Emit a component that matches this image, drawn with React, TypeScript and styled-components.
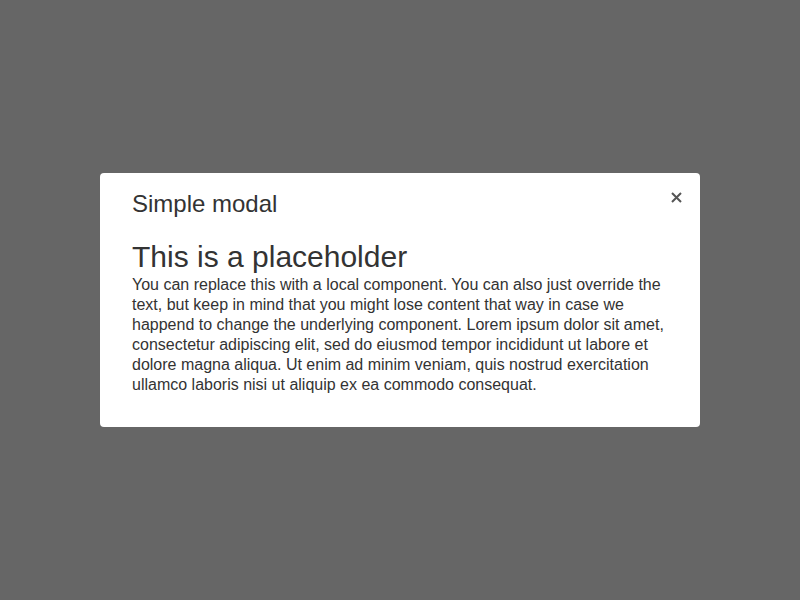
import React from 'react';
import styled, { createGlobalStyle } from 'styled-components';

const GlobalStyle = createGlobalStyle`
  html, body {
    margin: 0;
    padding: 0;
    height: 100%;
  }
  body {
    font-family: "Liberation Sans", Arial, sans-serif;
    background: #666666;
  }
  #root {
    height: 100%;
  }
`;

const Overlay = styled.div`
  width: 800px;
  height: 600px;
  background: #666666;
  display: flex;
  align-items: center;
  justify-content: center;
`;

const Modal = styled.div`
  position: relative;
  width: 600px;
  box-sizing: border-box;
  background: #ffffff;
  border-radius: 4px;
  padding: 16px 32px 32px 32px;
  color: #333333;
`;

const Title = styled.h2`
  margin: 0;
  font-size: 24px;
  font-weight: normal;
  line-height: 30px;
  color: #333333;
`;

const CloseButton = styled.button`
  position: absolute;
  top: 16px;
  right: 16px;
  width: 16px;
  height: 16px;
  padding: 0;
  border: none;
  background: transparent;
  cursor: pointer;
  display: flex;
  align-items: center;
  justify-content: center;
`;

const Heading = styled.h1`
  margin: 19px 0 0 0;
  font-size: 30px;
  font-weight: normal;
  line-height: 37px;
  color: #333333;
`;

const Body = styled.p`
  margin: 0;
  font-size: 16px;
  line-height: 20px;
  color: #333333;
`;

export default function App(): JSX.Element {
  return (
    <>
      <GlobalStyle />
      <Overlay>
        <Modal>
          <Title>Simple modal</Title>
          <CloseButton aria-label="Close">
            <svg width="11" height="11" viewBox="0 0 11 11">
              <path d="M1 1 L10 10 M10 1 L1 10" stroke="#555555" strokeWidth="2" />
            </svg>
          </CloseButton>
          <Heading>This is a placeholder</Heading>
          <Body>
            You can replace this with a local component. You can also just override the text, but
            keep in mind that you might lose content that way in case we happend to change the
            underlying component. Lorem ipsum dolor sit amet, consectetur adipiscing elit, sed do
            eiusmod tempor incididunt ut labore et dolore magna aliqua. Ut enim ad minim veniam,
            quis nostrud exercitation ullamco laboris nisi ut aliquip ex ea commodo consequat.
          </Body>
        </Modal>
      </Overlay>
    </>
  );
}
